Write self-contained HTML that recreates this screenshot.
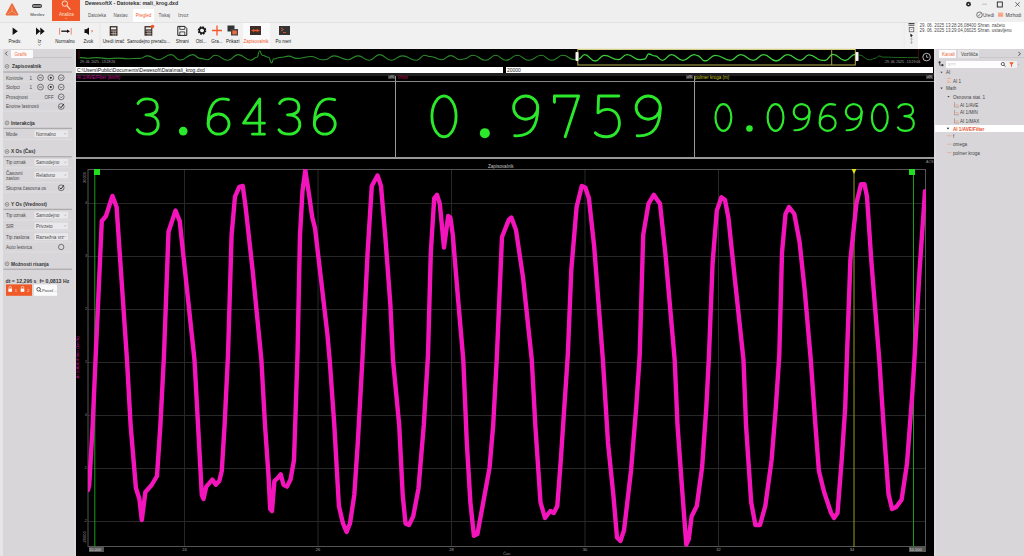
<!DOCTYPE html>
<html><head><meta charset="utf-8">
<style>
*{margin:0;padding:0;box-sizing:border-box}
html,body{width:1024px;height:556px;overflow:hidden;background:#f0f0f0;font-family:"Liberation Sans",sans-serif;color:#333}
.a{position:absolute;white-space:nowrap}
.t{font-size:5px;line-height:6px}
</style></head><body>
<div class="a" style="left:0;top:0;width:1024px;height:22px;background:#efefef"></div>
<!-- logo -->
<svg class="a" style="left:5px;top:3px" width="14" height="14" viewBox="0 0 14 14"><path d="M7 1.2 L12.6 11.6 L1.4 11.6 Z" fill="#ec6c3c" stroke="#ec6c3c" stroke-width="1.6" stroke-linejoin="round"/><path d="M7 3.5 L7 8 M7 8 L2.8 11 M7 8 L11.2 11" stroke="#f6a27c" stroke-width="0.9"/></svg>
<div class="a" style="left:31.8px;top:4.2px;width:10.4px;height:3.5px;border:0.8px solid #333;border-radius:1.5px;background:#888"></div>
<div class="a" style="left:30.3px;top:11.6px;font-size:4.4px;line-height:5.5px;color:#333">Merilev</div>
<div class="a" style="left:52px;top:0;width:28px;height:21px;background:#f0582a"></div>
<svg class="a" style="left:60.5px;top:0.3px" width="12" height="12" viewBox="0 0 12 12"><circle cx="3.8" cy="3.6" r="2.7" fill="none" stroke="#fde0d0" stroke-width="1"/><path d="M5.8 5.6 L9.4 9.6" stroke="#fde0d0" stroke-width="1.2"/></svg>
<div class="a" style="left:59px;top:11.6px;font-size:4.5px;line-height:5.5px;color:#fde0d0">Analiza</div>
<div class="a" style="left:64.5px;top:18px;width:0;height:0;border-left:1.5px solid transparent;border-right:1.5px solid transparent;border-top:1.5px solid #fbc8b0"></div>
<div class="a" style="left:85px;top:0.4px;font-size:5.3px;font-weight:bold;color:#333">DewesoftX - Datoteka: mali_krog.dxd</div>
<div class="a" style="left:133px;top:9px;width:21px;height:13px;background:#fff"></div>
<div class="a t" style="left:88px;top:13.3px;font-size:4.5px;color:#555">Datoteka</div>
<div class="a t" style="left:113.4px;top:13.3px;font-size:4.5px;color:#555">Nastav.</div>
<div class="a t" style="left:135.7px;top:13.3px;font-size:4.5px;color:#f0582a">Pregled</div>
<div class="a t" style="left:158.5px;top:13.3px;font-size:4.5px;color:#555">Tiskaj</div>
<div class="a t" style="left:177.9px;top:13.3px;font-size:4.5px;color:#555">Izvoz</div>
<!-- toolbar -->
<div class="a" style="left:0;top:22px;width:1024px;height:27px;background:#f1f1f1;border-top:1px solid #e2e2e2"></div>
<div class="a" style="left:242.5px;top:22.5px;width:27.5px;height:25.5px;background:#fafafa"></div>
<div class="a" style="left:-25.2px;width:80px;text-align:center;top:39.3px;font-size:4.5px;line-height:5.5px;color:#222">Predv.</div>
<div class="a" style="left:-0.5px;width:80px;text-align:center;top:39.3px;font-size:4.5px;line-height:5.5px;color:#222">Iz</div>
<div class="a" style="left:25px;width:80px;text-align:center;top:39.3px;font-size:4.5px;line-height:5.5px;color:#222">Normalno</div>
<div class="a" style="left:48.400000000000006px;width:80px;text-align:center;top:39.3px;font-size:4.5px;line-height:5.5px;color:#222">Zvok</div>
<div class="a" style="left:73.4px;width:80px;text-align:center;top:39.3px;font-size:4.5px;line-height:5.5px;color:#222">Uredi izrač</div>
<div class="a" style="left:108.4px;width:80px;text-align:center;top:39.3px;font-size:4.5px;line-height:5.5px;color:#222">Samodejno preraču...</div>
<div class="a" style="left:142.2px;width:80px;text-align:center;top:39.3px;font-size:4.5px;line-height:5.5px;color:#222">Shrani</div>
<div class="a" style="left:161.2px;width:80px;text-align:center;top:39.3px;font-size:4.5px;line-height:5.5px;color:#222">Obl...</div>
<div class="a" style="left:177px;width:80px;text-align:center;top:39.3px;font-size:4.5px;line-height:5.5px;color:#222">Gra...</div>
<div class="a" style="left:192.8px;width:80px;text-align:center;top:39.3px;font-size:4.5px;line-height:5.5px;color:#222">Prikazi</div>
<div class="a" style="left:216px;width:80px;text-align:center;top:39.3px;font-size:4.5px;line-height:5.5px;color:#f0582a">Zapisovalnik</div>
<div class="a" style="left:243.3px;width:80px;text-align:center;top:39.3px;font-size:4.5px;line-height:5.5px;color:#222">Po meri</div>

<svg class="a" style="left:0;top:22px" width="300" height="27" viewBox="0 0 300 27">
<path d="M12.6 5.4 L17.8 9.2 L12.6 13 Z" fill="#111"/>
<path d="M36 5.4 L40.3 9.2 L36 13 Z M40.3 5.4 L44.6 9.2 L40.3 13 Z" fill="#111"/>
<path d="M38.3 22.2 l1.2 1.2 l1.2 -1.2" fill="none" stroke="#555" stroke-width="0.6"/>
<path d="M59.6 6 V12.6 M71.2 6 V12.6" stroke="#f0582a" stroke-width="0.7"/>
<path d="M61.3 9.2 H67.5" stroke="#111" stroke-width="1.3"/><path d="M67 7.4 L70 9.2 L67 11 Z" fill="#111"/>
<path d="M84.5 7.3 H86.3 L89 5.4 V13 L86.3 11.1 H84.5 Z" fill="#111"/><path d="M91.2 8.3 l1.8 1.8 M93 8.3 l-1.8 1.8" stroke="#f0582a" stroke-width="0.6"/>
<g transform="translate(-3.3,0.6)"><rect x="113" y="3.5" width="7.8" height="9.6" fill="#3a2a22"/><rect x="114.3" y="4.8" width="5.2" height="2" fill="#eee"/>
<path d="M114 8.5 H120 M114 11 H120 M116.5 8 V13 M118.5 8 V13" stroke="#ddd" stroke-width="0.6"/></g>
<g transform="translate(3.5,0.6)"><rect x="141" y="3.5" width="7.8" height="9.6" fill="#3a2a22"/><rect x="142.3" y="4.8" width="5.4" height="2" fill="#eee"/>
<path d="M142 8.5 H148 M142 11 H148 M144.5 8 V13 M146.5 8 V13" stroke="#ddd" stroke-width="0.6"/><circle cx="149" cy="4" r="1.8" fill="#f0582a"/></g>
<g transform="translate(1.8,0.4)"><path d="M176 4 H183 L185 6 V13 H176 Z" fill="none" stroke="#222" stroke-width="1"/><path d="M178 4 V7 H183 V4 M178 13 V9.5 H183 V13" fill="none" stroke="#222" stroke-width="0.8"/></g>
<circle cx="202" cy="8.5" r="3.2" fill="none" stroke="#111" stroke-width="2.2" stroke-dasharray="1.6 0.9"/><circle cx="202" cy="8.5" r="2.6" fill="none" stroke="#111" stroke-width="1.3"/>
<path d="M217 3.5 V13.5 M212 8.5 H222" stroke="#f0582a" stroke-width="1.3"/>
<rect x="227.5" y="3.5" width="7" height="6" fill="#333"/><rect x="231" y="7" width="7" height="6.5" fill="#444"/><rect x="232.3" y="8.5" width="4.5" height="3.8" fill="#f26a3d"/>
<rect x="250" y="4" width="11" height="9" fill="#3a2e2a"/><path d="M251.5 8.5 H259.5" stroke="#f0582a" stroke-width="1.3"/><path d="M253 7 L255 8.5 L253 10 M258 7 L256 8.5 L258 10" stroke="#f0582a" stroke-width="0.7" fill="none"/>
<rect x="279" y="4" width="11" height="9" fill="#333"/><path d="M281 6 L283.5 7.5 L281 9 M283 10.5 H286" stroke="#f0582a" stroke-width="0.8" fill="none"/>
<path d="M100 1 V26" stroke="#e0e0e0" stroke-width="0.7"/>
</svg>
<!-- event log -->
<svg class="a" style="left:900px;top:20px" width="20" height="29">
<path d="M4.3 1 V29" stroke="#e6e6e6" stroke-width="0.6"/>
<path d="M8.5 3.5 H14.5 M8.5 5.2 H14.5" stroke="#444" stroke-width="1"/>
<rect x="9.2" y="7.4" width="4.6" height="4.4" fill="none" stroke="#555" stroke-width="0.7"/><path d="M10.6 8.8 L11.5 10 L12.4 8.8" fill="none" stroke="#777" stroke-width="0.5"/>
<path d="M10.4 13.6 L13 15.8 L11.6 16 L12.2 17 L11.6 17.2 L11 16.2 L10.4 17 Z" fill="#111"/>
<path d="M11.5 18 V23.5 M10.3 21.8 L11.5 23.5 L12.7 21.8 M10.3 19.6 L11.5 18 L12.7 19.6" fill="none" stroke="#999" stroke-width="0.6"/>
</svg>
<div class="a" style="left:918.3px;top:21.5px;width:106px;height:27.5px;background:#fff"></div>
<div class="a" style="left:919.5px;top:23px;font-size:4.45px;line-height:5.3px;color:#4a4a4a">29. 06. 2025 13:28:26,08400 Shran. začeto<br>29. 06. 2025 13:29:04,06025 Shran. ustavljeno</div>


<!-- main black -->
<div class="a" style="left:76px;top:49px;width:858px;height:507px;background:#000"></div>
<div class="a" style="left:0;top:49px;width:76px;height:507px;background:#d8d6d9"></div>
<div class="a" style="left:0;top:49px;width:2.5px;height:507px;background:#e6e5e7"></div>
<div class="a" style="left:73.8px;top:49px;width:2px;height:507px;background:#dddbde"></div>
<div class="a" style="left:11px;top:49.7px;width:22px;height:8px;background:#fbfbfb"></div>
<div class="a" style="left:33px;top:57px;width:39px;height:0.8px;background:#c4c4c4"></div>
<div class="a" style="left:14.5px;top:51.71px;font-size:4.6px;line-height:5.98px;color:#f26a3d;">Grafik</div>
<svg class="a" style="left:0;top:49px" width="76" height="260"><path d="M7.2 2.6 L5.4 4.5 L7.2 6.4" fill="none" stroke="#444" stroke-width="0.9"/><circle cx="7" cy="17.400000000000006" r="1.9" fill="none" stroke="#666" stroke-width="0.6"/><path d="M5.9 17.400000000000006 H8.1" stroke="#666" stroke-width="0.5"/><path d="M3.5 23 H72" stroke="#9a9a9a" stroke-width="0.9"/><circle cx="7" cy="73.9" r="1.9" fill="none" stroke="#666" stroke-width="0.6"/><path d="M5.9 73.9 H8.1" stroke="#666" stroke-width="0.5"/><path d="M3.5 79.30000000000001 H72" stroke="#9a9a9a" stroke-width="0.9"/><circle cx="7" cy="102.5" r="1.9" fill="none" stroke="#666" stroke-width="0.6"/><path d="M5.9 102.5 H8.1" stroke="#666" stroke-width="0.5"/><path d="M3.5 107.80000000000001 H72" stroke="#9a9a9a" stroke-width="0.9"/><circle cx="7" cy="155.4" r="1.9" fill="none" stroke="#666" stroke-width="0.6"/><path d="M5.9 155.4 H8.1" stroke="#666" stroke-width="0.5"/><path d="M3.5 160.3 H72" stroke="#9a9a9a" stroke-width="0.9"/><circle cx="7" cy="214.8" r="1.9" fill="none" stroke="#666" stroke-width="0.6"/><path d="M5.9 214.8 H8.1" stroke="#666" stroke-width="0.5"/><path d="M3.5 220.2 H72" stroke="#9a9a9a" stroke-width="0.9"/><path d="M3.5 32.400000000000006 H72" stroke="#e4e4e4" stroke-width="0.6"/><path d="M3.5 42.2 H72" stroke="#e4e4e4" stroke-width="0.6"/><path d="M3.5 52 H72" stroke="#e4e4e4" stroke-width="0.6"/><path d="M3.5 62 H72" stroke="#e4e4e4" stroke-width="0.6"/><path d="M3.5 90.5 H72" stroke="#e4e4e4" stroke-width="0.6"/><path d="M3.5 118.80000000000001 H72" stroke="#e4e4e4" stroke-width="0.6"/><path d="M3.5 133.6 H72" stroke="#e4e4e4" stroke-width="0.6"/><path d="M3.5 143 H72" stroke="#e4e4e4" stroke-width="0.6"/><path d="M3.5 171.1 H72" stroke="#e4e4e4" stroke-width="0.6"/><path d="M3.5 181.9 H72" stroke="#e4e4e4" stroke-width="0.6"/><path d="M3.5 192.8 H72" stroke="#e4e4e4" stroke-width="0.6"/><path d="M3.5 203 H72" stroke="#e4e4e4" stroke-width="0.6"/><circle cx="40.5" cy="28.700000000000003" r="2.9" fill="none" stroke="#333" stroke-width="0.6"/><path d="M39.0 28.700000000000003 H42.0" stroke="#333" stroke-width="0.6"/><circle cx="50.8" cy="28.700000000000003" r="2.9" fill="none" stroke="#333" stroke-width="0.6"/><circle cx="50.8" cy="28.700000000000003" r="1" fill="#222"/><circle cx="61.2" cy="28.700000000000003" r="2.9" fill="none" stroke="#333" stroke-width="0.6"/><path d="M59.800000000000004 28.200000000000003 L61.2 29.6 L62.6 28.200000000000003" fill="none" stroke="#333" stroke-width="0.6"/><circle cx="40.5" cy="38.099999999999994" r="2.9" fill="none" stroke="#333" stroke-width="0.6"/><path d="M39.0 38.099999999999994 H42.0" stroke="#333" stroke-width="0.6"/><circle cx="50.8" cy="38.099999999999994" r="2.9" fill="none" stroke="#333" stroke-width="0.6"/><circle cx="50.8" cy="38.099999999999994" r="1" fill="#222"/><circle cx="61.2" cy="38.099999999999994" r="2.9" fill="none" stroke="#333" stroke-width="0.6"/><path d="M59.800000000000004 37.599999999999994 L61.2 38.99999999999999 L62.6 37.599999999999994" fill="none" stroke="#333" stroke-width="0.6"/><circle cx="61.2" cy="47.900000000000006" r="2.9" fill="none" stroke="#333" stroke-width="0.6"/><path d="M59.800000000000004 47.400000000000006 L61.2 48.800000000000004 L62.6 47.400000000000006" fill="none" stroke="#333" stroke-width="0.6"/><circle cx="61.2" cy="57.5" r="2.9" fill="none" stroke="#333" stroke-width="0.6"/><path d="M59.6 57.3 L61.0 58.8 L63.800000000000004 54.9" fill="none" stroke="#222" stroke-width="0.9"/><circle cx="61.2" cy="138.8" r="2.9" fill="none" stroke="#333" stroke-width="0.6"/><path d="M59.6 138.60000000000002 L61.0 140.10000000000002 L63.800000000000004 136.20000000000002" fill="none" stroke="#222" stroke-width="0.9"/><circle cx="61.2" cy="198" r="2.7" fill="none" stroke="#333" stroke-width="0.6"/><rect x="34.5" y="81.39999999999999" width="33.5" height="6.6" fill="#e9e8ea"/><path d="M64.3 84.19999999999999 L65.3 85.19999999999999 L66.3 84.19999999999999" fill="none" stroke="#888" stroke-width="0.5"/><rect x="34.5" y="110.00000000000001" width="33.5" height="6.6" fill="#e9e8ea"/><path d="M64.3 112.80000000000001 L65.3 113.80000000000001 L66.3 112.80000000000001" fill="none" stroke="#888" stroke-width="0.5"/><rect x="34.5" y="122.7" width="33.5" height="6.6" fill="#e9e8ea"/><path d="M64.3 125.5 L65.3 126.5 L66.3 125.5" fill="none" stroke="#888" stroke-width="0.5"/><rect x="34.5" y="162.79999999999998" width="33.5" height="6.6" fill="#e9e8ea"/><path d="M64.3 165.6 L65.3 166.6 L66.3 165.6" fill="none" stroke="#888" stroke-width="0.5"/><rect x="34.5" y="173.6" width="33.5" height="6.6" fill="#e9e8ea"/><path d="M64.3 176.4 L65.3 177.4 L66.3 176.4" fill="none" stroke="#888" stroke-width="0.5"/><rect x="34.5" y="184.29999999999998" width="33.5" height="6.6" fill="#e9e8ea"/><path d="M64.3 187.1 L65.3 188.1 L66.3 187.1" fill="none" stroke="#888" stroke-width="0.5"/><rect x="6" y="235.4" width="26" height="11.4" fill="#f05a28"/><rect x="33.8" y="235.4" width="23.2" height="11.4" fill="#fafafa"/><path d="M9.0 239.6 V238.6 A1.2 1.2 0 0 1 11.399999999999999 238.6 V239.6" fill="none" stroke="#fff" stroke-width="0.6"/><rect x="8.399999999999999" y="239.6" width="3.6" height="3.2" fill="#fff"/><path d="M21.3 239.6 V238.6 A1.2 1.2 0 0 1 23.7 238.6 V239.6" fill="none" stroke="#fff" stroke-width="0.6"/><rect x="20.7" y="239.6" width="3.6" height="3.2" fill="#fff"/><circle cx="38.6" cy="240.3" r="1.8" fill="none" stroke="#222" stroke-width="0.7"/><path d="M39.9 241.6 L41.3 243" stroke="#222" stroke-width="0.8"/></svg>
<div class="a" style="left:12px;top:64.18px;font-size:4.8px;line-height:6.24px;color:#333;font-weight:bold;">Zapisovalnik</div>
<div class="a" style="left:6px;top:75.61px;font-size:4.6px;line-height:5.98px;color:#4a4a4a;">Kontrole</div>
<div class="a" style="left:29.5px;top:75.61px;font-size:4.6px;line-height:5.98px;color:#4a4a4a;">1</div>
<div class="a" style="left:6px;top:85.01px;font-size:4.6px;line-height:5.98px;color:#4a4a4a;">Stolpci</div>
<div class="a" style="left:29.5px;top:85.01px;font-size:4.6px;line-height:5.98px;color:#4a4a4a;">1</div>
<div class="a" style="left:6px;top:94.81px;font-size:4.6px;line-height:5.98px;color:#4a4a4a;">Prosojnost</div>
<div class="a" style="left:44.5px;top:94.81px;font-size:4.6px;line-height:5.98px;color:#4a4a4a;">OFF</div>
<div class="a" style="left:6px;top:104.41px;font-size:4.6px;line-height:5.98px;color:#4a4a4a;">Enotne lastnosti</div>
<div class="a" style="left:11px;top:120.68px;font-size:4.8px;line-height:6.24px;color:#333;font-weight:bold;">Interakcija</div>
<div class="a" style="left:6px;top:131.81px;font-size:4.6px;line-height:5.98px;color:#4a4a4a;">Mode</div>
<div class="a" style="left:36px;top:131.81px;font-size:4.6px;line-height:5.98px;color:#4a4a4a;">Normalno</div>
<div class="a" style="left:11px;top:149.28px;font-size:4.8px;line-height:6.24px;color:#333;font-weight:bold;">X Os (Čas)</div>
<div class="a" style="left:6px;top:160.21px;font-size:4.6px;line-height:5.98px;color:#4a4a4a;">Tip oznak</div>
<div class="a" style="left:36px;top:160.21px;font-size:4.6px;line-height:5.98px;color:#4a4a4a;">Samodejno</div>
<div class="a" style="left:6px;top:171.01px;font-size:4.6px;line-height:5.98px;color:#4a4a4a;">Časovni</div>
<div class="a" style="left:6px;top:175.91px;font-size:4.6px;line-height:5.98px;color:#4a4a4a;">zaslon</div>
<div class="a" style="left:36px;top:172.91px;font-size:4.6px;line-height:5.98px;color:#4a4a4a;">Relativno</div>
<div class="a" style="left:6px;top:185.71px;font-size:4.6px;line-height:5.98px;color:#4a4a4a;">Skupna časovna os</div>
<div class="a" style="left:11px;top:202.18px;font-size:4.8px;line-height:6.24px;color:#333;font-weight:bold;">Y Os (Vrednost)</div>
<div class="a" style="left:6px;top:213.01px;font-size:4.6px;line-height:5.98px;color:#4a4a4a;">Tip oznak</div>
<div class="a" style="left:36px;top:213.01px;font-size:4.6px;line-height:5.98px;color:#4a4a4a;">Samodejno</div>
<div class="a" style="left:6px;top:223.81px;font-size:4.6px;line-height:5.98px;color:#4a4a4a;">SIR</div>
<div class="a" style="left:36px;top:223.81px;font-size:4.6px;line-height:5.98px;color:#4a4a4a;">Privzeto</div>
<div class="a" style="left:6px;top:234.51px;font-size:4.6px;line-height:5.98px;color:#4a4a4a;">Tip zaslona</div>
<div class="a" style="left:36px;top:234.51px;font-size:4.6px;line-height:5.98px;color:#4a4a4a;">Razsežna vrz</div>
<div class="a" style="left:6px;top:244.91px;font-size:4.6px;line-height:5.98px;color:#4a4a4a;">Auto lestvica</div>
<div class="a" style="left:11px;top:261.58px;font-size:4.8px;line-height:6.24px;color:#333;font-weight:bold;">Možnosti risanja</div>
<div class="a" style="left:5.5px;top:278.42px;font-size:5.2px;line-height:6.76px;color:#333;font-weight:bold;">dt = 12,296 s&nbsp; f= 0,0813 Hz</div>
<div class="a" style="left:14.8px;top:287.64px;font-size:4.4px;line-height:5.72px;color:#fde0d0;">1</div>
<div class="a" style="left:27px;top:287.64px;font-size:4.4px;line-height:5.72px;color:#fde0d0;">2</div>
<div class="a" style="left:42px;top:287.57px;font-size:4.2px;line-height:5.46px;color:#444;">Poveč...</div>
<div class="a" style="left:934px;top:49px;width:90px;height:507px;background:#d8d6d9"></div>
<div class="a" style="left:934px;top:49px;width:2.2px;height:507px;background:#dddbde"></div>
<div class="a" style="left:939.2px;top:50.3px;width:17.2px;height:7.5px;background:#fbfbfb"></div>
<div class="a" style="left:957.6px;top:50.3px;width:21.3px;height:7.5px;background:#e6e6e6"></div>
<div class="a" style="left:979px;top:57px;width:45px;height:0.8px;background:#c8c8c8"></div>
<div class="a" style="left:942px;top:51.91px;font-size:4.6px;line-height:5.98px;color:#f26a3d;">Kanali</div>
<div class="a" style="left:961px;top:51.91px;font-size:4.6px;line-height:5.98px;color:#444;">Vozlišča</div>
<div class="a" style="left:946px;top:60.7px;width:58px;height:7.4px;background:#fdfdfd"></div>
<div class="a" style="left:1004px;top:60.7px;width:13px;height:7.4px;background:#f0f0f0"></div>
<div class="a" style="left:948px;top:62.44px;font-size:4.4px;line-height:5.72px;color:#bbb;">3??</div>
<svg class="a" style="left:935px;top:49px" width="89" height="120"><path d="M83.5 2.8 L85.3 4.8 L83.5 6.8" fill="none" stroke="#333" stroke-width="0.8"/><circle cx="4.6" cy="13.4" r="1.1" fill="#333"/><circle cx="7.4" cy="16.2" r="1.1" fill="#333"/><path d="M4.6 14 V16.2 H6.5" fill="none" stroke="#333" stroke-width="0.6"/><circle cx="67.8" cy="15" r="1.6" fill="none" stroke="#222" stroke-width="0.7"/><path d="M69 16.2 L70.3 17.5" stroke="#222" stroke-width="0.8"/><path d="M74.2 13.3 H78.8 L77 15.8 V18 L76 17.4 V15.8 Z" fill="#f05a28"/><path d="M82.8 15 L83.6 15.8 L84.4 15" fill="none" stroke="#999" stroke-width="0.5"/><path d="M5.3 22.700000000000006 H7.7 L6.5 24.300000000000004 Z" fill="#444"/><path d="M5.3 38.599999999999994 H7.7 L6.5 40.199999999999996 Z" fill="#444"/><path d="M12.3 46.89999999999999 H14.7 L13.5 48.49999999999999 Z" fill="#444"/><path d="M11.7 78.8 H14.3 L13 80.6 Z" fill="#222"/><path d="M12 29.5 H16 M12 31.5 L16 33.5 M12 33.5 H14" stroke="#f4a080" stroke-width="0.7"/><path d="M19.5 53.199999999999996 V57.99999999999999 H24" fill="none" stroke="#9a6a5a" stroke-width="0.5"/><path d="M20.5 55.89999999999999 H23.5" stroke="#f08060" stroke-width="0.5"/><path d="M19.5 61.00000000000001 V65.80000000000001 H24" fill="none" stroke="#9a6a5a" stroke-width="0.5"/><path d="M20.5 63.7 H23.5" stroke="#f08060" stroke-width="0.5"/><path d="M19.5 69.19999999999999 V74.0 H24" fill="none" stroke="#9a6a5a" stroke-width="0.5"/><path d="M20.5 71.89999999999999 H23.5" stroke="#f08060" stroke-width="0.5"/><path d="M12.3 86.80000000000001 H16.3" stroke="#f08060" stroke-width="0.6" stroke-dasharray="1 0.5"/><path d="M12.3 95.19999999999999 H16.3" stroke="#f08060" stroke-width="0.6" stroke-dasharray="1 0.5"/><path d="M12.3 103.6 H16.3" stroke="#f08060" stroke-width="0.6" stroke-dasharray="1 0.5"/></svg>
<div class="a" style="left:935px;top:125.3px;width:89px;height:6.5px;background:#fff"></div>
<svg class="a" style="left:935px;top:49px" width="89" height="120"><path d="M11.7 78.8 H14.3 L13 80.6 Z" fill="#222"/></svg>
<div class="a" style="left:946px;top:70.31px;font-size:4.6px;line-height:5.98px;color:#444;">AI</div>
<div class="a" style="left:953px;top:78.71px;font-size:4.6px;line-height:5.98px;color:#444;">AI 1</div>
<div class="a" style="left:946px;top:86.21px;font-size:4.6px;line-height:5.98px;color:#444;">Math</div>
<div class="a" style="left:953px;top:94.51px;font-size:4.6px;line-height:5.98px;color:#444;">Osnovna stat. 1</div>
<div class="a" style="left:960px;top:102.51px;font-size:4.6px;line-height:5.98px;color:#444;">AI 1/AVE</div>
<div class="a" style="left:960px;top:110.31px;font-size:4.6px;line-height:5.98px;color:#444;">AI 1/MIN</div>
<div class="a" style="left:960px;top:118.51px;font-size:4.6px;line-height:5.98px;color:#444;">AI 1/MAX</div>
<div class="a" style="left:953px;top:126.51px;font-size:4.6px;line-height:5.98px;color:#e8502a;font-weight:bold;">AI 1/AVE/Filter</div>
<div class="a" style="left:953px;top:133.71px;font-size:4.6px;line-height:5.98px;color:#444;">f</div>
<div class="a" style="left:953px;top:142.11px;font-size:4.6px;line-height:5.98px;color:#444;">omega</div>
<div class="a" style="left:953px;top:150.51px;font-size:4.6px;line-height:5.98px;color:#444;">polmer kroga</div>
<svg class="a" style="left:960px;top:0" width="64" height="22"><circle cx="8.5" cy="4.2" r="2.4" fill="#222"/><circle cx="8.5" cy="4.2" r="0.8" fill="#eee"/><path d="M22 4.2 H27" stroke="#aaa" stroke-width="0.7"/><rect x="37.3" y="2" width="5" height="5" fill="none" stroke="#222" stroke-width="0.9"/><path d="M55.3 2.2 L59.7 6.6 M59.7 2.2 L55.3 6.6" stroke="#333" stroke-width="0.7"/><circle cx="19.5" cy="14.8" r="2.8" fill="none" stroke="#444" stroke-width="0.7"/><path d="M18.3 16 L20.8 13.5" stroke="#444" stroke-width="0.7"/><rect x="38" y="12.5" width="5.2" height="4.5" fill="#f6b49a"/><path d="M38 14 H43.2 M38 15.5 H43.2" stroke="#f08a64" stroke-width="0.4"/></svg>
<div class="a" style="left:983px;top:12.71px;font-size:4.6px;line-height:5.98px;color:#444;">Uredi</div>
<div class="a" style="left:1005.5px;top:12.71px;font-size:4.6px;line-height:5.98px;color:#444;">Mizhodi</div>
<svg class="a" style="left:0;top:0" width="1024" height="70">
<path d="M79 50 V59" stroke="#5a1010" stroke-width="0.8"/>
<path d="M918.4 49 V62" stroke="#5a1010" stroke-width="0.8"/>
<path d="M79.8,57.6 C83.9,57.6 83.9,58.2 88.0,58.2 C92.5,58.2 92.5,57.6 97.0,57.6 C102.5,57.6 102.5,58.6 108.0,58.6 C113.0,58.6 113.0,58.1 118.0,58.1 C123.0,58.1 123.0,58.7 128.0,58.7 C133.8,58.7 133.8,58.4 139.5,58.4 C143.6,58.4 143.6,55.9 147.7,55.9 C153.1,55.9 153.1,59.7 158.5,59.7 C164.8,59.7 164.8,54.6 171.2,54.6 C175.6,54.6 175.6,60.0 180.1,60.0 C186.4,60.0 186.4,54.6 192.8,54.6 C196.4,54.6 196.4,58.4 200.0,58.4 C203.8,58.4 203.8,59.7 207.6,59.7 C211.4,59.7 211.4,55.3 215.2,55.3 C221.6,55.3 221.6,60.3 227.9,60.3 C233.0,60.3 233.0,54.6 238.1,54.6 C244.4,54.6 244.4,60.3 250.8,60.3 C253.9,60.3 253.9,57.2 257.0,57.2 C258.4,57.2 258.4,50.8 259.7,50.8 C260.9,50.8 260.9,55.3 262.2,55.3 C265.4,55.3 265.4,57.2 268.6,57.2 C270.1,57.2 270.1,62.9 271.7,62.9 C272.6,62.9 272.6,59.0 273.6,59.0 C277.4,59.0 277.4,57.2 281.2,57.2 C285.0,57.2 285.0,56.1 288.9,56.1 C292.7,56.1 292.7,58.4 296.5,58.4 C304.1,58.4 304.1,56.5 311.7,56.5 C316.8,56.5 316.8,59.7 321.9,59.7 C323.4,59.7 323.4,59.7 325.0,59.7 C329.4,59.7 329.4,55.9 333.9,55.9 C340.9,55.9 340.9,59.7 347.9,59.7 C352.9,59.7 352.9,55.9 358.0,55.9 C363.7,55.9 363.7,60.3 369.4,60.3 C374.5,60.3 374.5,54.6 379.6,54.6 C385.3,54.6 385.3,60.3 391.0,60.3 C396.7,60.3 396.7,55.9 402.4,55.9 C409.4,55.9 409.4,60.3 416.4,60.3 C420.5,60.3 420.5,55.3 424.7,55.3 C427.5,55.3 427.5,56.5 430.4,56.5 C436.1,56.5 436.1,59.7 441.8,59.7 C446.2,59.7 446.2,55.6 450.7,55.6 C455.4,55.6 455.4,59.7 460.2,59.7 C462.1,59.7 462.1,59.0 464.0,59.0 C468.4,59.0 468.4,55.3 472.9,55.3 C479.2,55.3 479.2,60.3 485.5,60.3 C490.6,60.3 490.6,55.3 495.7,55.3 C500.8,55.3 500.8,60.3 505.9,60.3 C511.6,60.3 511.6,55.3 517.3,55.3 C523.0,55.3 523.0,60.3 528.7,60.3 C535.0,60.3 535.0,55.3 541.4,55.3 C546.5,55.3 546.5,60.3 551.6,60.3 C557.3,60.3 557.3,55.3 563.0,55.3 C568.7,55.3 568.7,59.7 574.4,59.7 C575.7,59.7 575.7,59.0 577.0,59.0" fill="none" stroke="#2a8a2a" stroke-width="1.1"/>
<path d="M858.7,54.9 C864.3,54.9 864.3,59.9 869.9,59.9 C872.7,59.9 872.7,58.2 875.5,58.2 C877.2,58.2 877.2,56.0 878.9,56.0 C881.1,56.0 881.1,57.1 883.4,57.1 C891.7,57.1 891.7,57.5 900.0,57.5 C909.1,57.5 909.1,57.7 918.2,57.7" fill="none" stroke="#1f6a1f" stroke-width="1" />
<path d="M578.8,59.0 C581.6,59.0 581.6,54.6 584.5,54.6 C589.9,54.6 589.9,61.0 595.3,61.0 C599.8,61.0 599.8,55.3 604.2,55.3 C611.2,55.3 611.2,59.7 618.2,59.7 C622.6,59.7 622.6,54.6 627.0,54.6 C633.4,54.6 633.4,59.7 639.7,59.7 C642.2,59.7 642.2,59.0 644.8,59.0 C646.7,59.0 646.7,54.0 648.6,54.0 C651.8,54.0 651.8,55.9 655.0,55.9 C658.8,55.9 658.8,60.3 662.6,60.3 C667.0,60.3 667.0,54.6 671.5,54.6 C677.2,54.6 677.2,60.3 682.9,60.3 C688.6,60.3 688.6,54.6 694.3,54.6 C695.6,54.6 695.6,55.3 696.9,55.3 C701.0,55.3 701.0,61.0 705.1,61.0 C710.2,61.0 710.2,55.3 715.2,55.3 C722.9,55.3 722.9,60.3 730.5,60.3 C735.5,60.3 735.5,54.6 740.6,54.6 C747.0,54.6 747.0,60.3 753.3,60.3 C758.4,60.3 758.4,54.6 763.5,54.6 C769.9,54.6 769.9,61.0 776.2,61.0 C781.9,61.0 781.9,54.6 787.6,54.6 C794.0,54.6 794.0,60.3 800.3,60.3 C804.8,60.3 804.8,54.9 809.2,54.9 C815.5,54.9 815.5,60.3 821.9,60.3 C823.5,60.3 823.5,60.5 825.0,60.5 C829.0,60.5 829.0,54.3 832.9,54.3 C839.0,54.3 839.0,60.5 845.2,60.5 C850.2,60.5 850.2,54.3 855.3,54.3" fill="none" stroke="#3ccc3c" stroke-width="1.3"/>
<rect x="577.8" y="49.4" width="277.5" height="15.6" fill="none" stroke="#b8b04a" stroke-width="1"/>
<path d="M578.5 49.4 H855" stroke="#e8e0a0" stroke-width="0.8"/>
<path d="M831.7 49.5 V65" stroke="#b8b04a" stroke-width="0.9"/>
<rect x="575.5" y="52" width="3" height="9" rx="0.8" fill="#f4f4f4"/>
<rect x="855.5" y="52" width="3" height="9" rx="0.8" fill="#f4f4f4"/>
<circle cx="926.6" cy="57.1" r="3.8" fill="none" stroke="#ccc" stroke-width="0.9"/>
<path d="M926.6 55 V57.3 H928.4" fill="none" stroke="#ccc" stroke-width="0.8"/>
</svg>
<div class="a" style="left:80px;top:60px;font-size:3.4px;line-height:5px;color:#aaa">29. 06. 2025 - 13:28:26</div>
<div class="a" style="left:885px;top:60px;font-size:3.4px;line-height:5px;color:#aaa">29. 06. 2025 - 13:29:04</div>

<div class="a" style="left:76px;top:66.8px;width:427px;height:5.8px;background:#fff"></div>
<div class="a" style="left:505.5px;top:66.8px;width:427.5px;height:5.8px;background:#fff"></div>
<div class="a" style="left:76px;top:73px;width:858px;height:2.6px;background:#1f1f1f"></div>
<div class="a" style="left:76px;top:81px;width:858px;height:1px;background:#888"></div>
<div class="a" style="left:76px;top:157px;width:858px;height:1.5px;background:#999"></div>
<div class="a" style="left:395.2px;top:76px;width:1.3px;height:82px;background:#999"></div>
<div class="a" style="left:693.5px;top:76px;width:1.3px;height:82px;background:#999"></div>
<div class="a" style="left:77px;top:66.5px;font-size:5px;line-height:6.5px;color:#111">C:\Users\Public\Documents\Dewesoft\Data\mali_krog.dxd</div>
<div class="a" style="left:507px;top:66.5px;font-size:5px;line-height:6.5px;color:#222">20000</div>
<div class="a" style="left:77px;top:75.4px;font-size:4.5px;line-height:6px;color:#c8149a">AI 1/AVE/Filter (km/h)</div>
<div class="a" style="left:387.5px;top:74.5px;width:7.5px;height:4.5px;background:#3a3a3a;font-size:3.2px;line-height:4.5px;color:#bbb;text-align:center">ufN</div>
<div class="a" style="left:685.5px;top:74.5px;width:7.5px;height:4.5px;background:#3a3a3a;font-size:3.2px;line-height:4.5px;color:#bbb;text-align:center">ufN</div>
<div class="a" style="left:925.5px;top:74.5px;width:7.5px;height:4.5px;background:#3a3a3a;font-size:3.2px;line-height:4.5px;color:#bbb;text-align:center">ufN</div>
<div class="a" style="left:398px;top:75px;font-size:4.5px;line-height:6px;color:#c01050">f/min</div>
<div class="a" style="left:695px;top:75px;font-size:4.5px;line-height:6px;color:#c8c820">polmer kroga (m)</div>
<svg class="a" style="left:0;top:0" width="1024" height="556"><g fill="none" stroke="#2be82b" stroke-width="7.6" stroke-linecap="round" stroke-linejoin="round"><g transform="translate(136.08,97.65) scale(0.3780)"><path d="M5 15.5 C10 6,19 3.4,30 3.4 C46 3.4,56 12,56 25.5 C56 38,45 45.5,26 45.5 M26 45.5 C47 45.5,58.6 56,58.6 71 C58.6 87,46 96.6,30 96.6 C18 96.6,8 93,3.4 85"/></g><g transform="translate(171.48,97.65) scale(0.3780)"><circle cx="31" cy="88.5" r="11.5" fill="#2be82b" stroke="none"/></g><g transform="translate(206.88,97.65) scale(0.3780)"><path d="M57 5.5 C52 4,47 3.4,42 3.4 C18 3.4,3.4 28,3.4 70"/><ellipse cx="31" cy="70" rx="27.6" ry="26.6"/></g><g transform="translate(242.28,97.65) scale(0.3780)"><path d="M46 96.6 V3.4 L3.4 67.5 H58.6 M27 96.6 H58.6"/></g><g transform="translate(277.68,97.65) scale(0.3780)"><path d="M5 15.5 C10 6,19 3.4,30 3.4 C46 3.4,56 12,56 25.5 C56 38,45 45.5,26 45.5 M26 45.5 C47 45.5,58.6 56,58.6 71 C58.6 87,46 96.6,30 96.6 C18 96.6,8 93,3.4 85"/></g><g transform="translate(313.08,97.65) scale(0.3780)"><path d="M57 5.5 C52 4,47 3.4,42 3.4 C18 3.4,3.4 28,3.4 70"/><ellipse cx="31" cy="70" rx="27.6" ry="26.6"/></g></g><g fill="none" stroke="#2be82b" stroke-width="6.6" stroke-linecap="round" stroke-linejoin="round"><g transform="translate(430.45,94.50) scale(0.4370)"><ellipse cx="31" cy="50" rx="27.6" ry="46.6"/></g><g transform="translate(471.29,94.50) scale(0.4370)"><circle cx="31" cy="88.5" r="11.5" fill="#2be82b" stroke="none"/></g><g transform="translate(512.13,94.50) scale(0.4370)"><ellipse cx="31" cy="30" rx="27.6" ry="26.6"/><path d="M58.6 30 C58.6 72,44 96.6,6 94.5"/></g><g transform="translate(552.97,94.50) scale(0.4370)"><path d="M3.4 18 V3.4 H58.6 L28 96.6"/></g><g transform="translate(593.81,94.50) scale(0.4370)"><path d="M57 3.4 H11 L9.5 42 C17 36,24 34,31 34 C48 34,58.6 48,58.6 66 C58.6 85,46 96.6,29 96.6 C18 96.6,8 93,3.4 87.5"/></g><g transform="translate(634.65,94.50) scale(0.4370)"><ellipse cx="31" cy="30" rx="27.6" ry="26.6"/><path d="M58.6 30 C58.6 72,44 96.6,6 94.5"/></g></g><g fill="none" stroke="#2be82b" stroke-width="7.6" stroke-linecap="round" stroke-linejoin="round"><g transform="translate(714.50,103.10) scale(0.2870)"><ellipse cx="31" cy="50" rx="27.6" ry="46.6"/></g><g transform="translate(740.57,103.10) scale(0.2870)"><circle cx="31" cy="88.5" r="11.5" fill="#2be82b" stroke="none"/></g><g transform="translate(766.64,103.10) scale(0.2870)"><ellipse cx="31" cy="50" rx="27.6" ry="46.6"/></g><g transform="translate(792.71,103.10) scale(0.2870)"><ellipse cx="31" cy="30" rx="27.6" ry="26.6"/><path d="M58.6 30 C58.6 72,44 96.6,6 94.5"/></g><g transform="translate(818.78,103.10) scale(0.2870)"><path d="M57 5.5 C52 4,47 3.4,42 3.4 C18 3.4,3.4 28,3.4 70"/><ellipse cx="31" cy="70" rx="27.6" ry="26.6"/></g><g transform="translate(844.85,103.10) scale(0.2870)"><ellipse cx="31" cy="30" rx="27.6" ry="26.6"/><path d="M58.6 30 C58.6 72,44 96.6,6 94.5"/></g><g transform="translate(870.92,103.10) scale(0.2870)"><ellipse cx="31" cy="50" rx="27.6" ry="46.6"/></g><g transform="translate(896.99,103.10) scale(0.2870)"><path d="M5 15.5 C10 6,19 3.4,30 3.4 C46 3.4,56 12,56 25.5 C56 38,45 45.5,26 45.5 M26 45.5 C47 45.5,58.6 56,58.6 71 C58.6 87,46 96.6,30 96.6 C18 96.6,8 93,3.4 85"/></g></g></svg>

<div class="a" style="left:488px;top:163.5px;font-size:4.6px;line-height:6px;color:#c8c8c8">Zapisovalnik</div>
<div class="a" style="left:926px;top:159.5px;font-size:3.6px;line-height:5px;color:#999">AOS</div>
<div class="a" style="left:57px;top:355.5px;width:40px;text-align:center;font-size:4.4px;line-height:5px;color:#c0109a;transform:rotate(-90deg)">AI 1/AVE/Filter (km/h)</div>
<div class="a" style="left:75px;top:175px;width:18px;text-align:center;font-size:4px;line-height:5px;color:#999;transform:rotate(-90deg)">20000</div>
<div class="a" style="left:75px;top:534.5px;width:18px;text-align:center;font-size:4px;line-height:5px;color:#999;transform:rotate(-90deg)">-20000</div>
<div class="a" style="left:88.5px;top:546px;width:15px;height:6px;background:#555"></div>
<div class="a" style="left:89px;top:546.5px;font-size:4px;line-height:5px;color:#ddd">10.000</div>
<div class="a" style="left:909px;top:546px;width:17px;height:6px;background:#555"></div>
<div class="a" style="left:909.5px;top:546.5px;font-size:4px;line-height:5px;color:#ddd">10.500</div>
<div class="a" style="left:503px;top:551px;font-size:4.2px;line-height:5px;color:#999">Čas</div>
<div class="a" style="left:174.5px;width:20px;text-align:center;top:546.5px;font-size:4px;line-height:5px;color:#aaa">24</div>
<div class="a" style="left:308px;width:20px;text-align:center;top:546.5px;font-size:4px;line-height:5px;color:#aaa">26</div>
<div class="a" style="left:441.5px;width:20px;text-align:center;top:546.5px;font-size:4px;line-height:5px;color:#aaa">28</div>
<div class="a" style="left:575px;width:20px;text-align:center;top:546.5px;font-size:4px;line-height:5px;color:#aaa">30</div>
<div class="a" style="left:708.5px;width:20px;text-align:center;top:546.5px;font-size:4px;line-height:5px;color:#aaa">32</div>
<div class="a" style="left:842px;width:20px;text-align:center;top:546.5px;font-size:4px;line-height:5px;color:#aaa">34</div>
<div class="a" style="left:80px;width:7px;text-align:right;top:201.0px;font-size:3.8px;line-height:5px;color:#888">4</div>
<div class="a" style="left:80px;width:7px;text-align:right;top:254.0px;font-size:3.8px;line-height:5px;color:#888">3</div>
<div class="a" style="left:80px;width:7px;text-align:right;top:307.0px;font-size:3.8px;line-height:5px;color:#888">2</div>
<div class="a" style="left:80px;width:7px;text-align:right;top:360.0px;font-size:3.8px;line-height:5px;color:#888">1</div>
<div class="a" style="left:80px;width:7px;text-align:right;top:413.0px;font-size:3.8px;line-height:5px;color:#888">0</div>
<div class="a" style="left:80px;width:7px;text-align:right;top:466.0px;font-size:3.8px;line-height:5px;color:#888">-1</div>
<div class="a" style="left:80px;width:7px;text-align:right;top:519.0px;font-size:3.8px;line-height:5px;color:#888">-2</div>

<svg class="a" style="left:0;top:0" width="1024" height="556" viewBox="0 0 1024 556">
<defs><clipPath id="pc"><rect x="88" y="169" width="838" height="378"/></clipPath></defs>
<g stroke="#282828" stroke-width="1">
<path d="M88 203.5 H926 M88 256.5 H926 M88 309.5 H926 M88 362.5 H926 M88 415.5 H926 M88 468.5 H926 M88 521.5 H926"/>
<path d="M184.5 169 V547 M318 169 V547 M451.5 169 V547 M585 169 V547 M718.5 169 V547"/>
</g>
<rect x="88" y="169.5" width="837.5" height="377" fill="none" stroke="#555" stroke-width="1"/>
<path d="M94.8 169 V547" stroke="#1a9a1a" stroke-width="1"/>
<rect x="94" y="169" width="6" height="6" fill="#22dd22"/>
<path d="M913.5 169 V547" stroke="#1a9a1a" stroke-width="1"/>
<rect x="909" y="169" width="6" height="6" fill="#22dd22"/>
<path d="M854 169 V547" stroke="#9a9a20" stroke-width="1"/>
<path d="M851.5 169 L856.5 169 L854 174 Z" fill="#e0e020"/>
<g clip-path="url(#pc)"><polyline points="88,490 89.2,485 92.7,425 95.5,360 101.8,221 106,216 112.4,195.9 116.6,207 127,360 130.6,425 135.9,488 139.4,499 141.8,520 145.4,492 151.7,485 157,476 160.4,425 164,355 168.5,231.7 175.5,210.6 179.7,221 194.5,360 199,442.7 201.8,495 203.5,499 206.3,486.6 212.3,479.6 215.8,484.8 219.3,481 221.8,470.8 224.6,425 228,355 231.6,235 235,196.6 239.3,186.8 242.8,186 245.6,207 252.6,270 261.4,360 265,425 268.4,474 270.2,509 272,511 274.4,481 277.9,477.8 280.7,474.3 283.5,484.8 287,486.6 290.5,479.6 294,460 297.5,355 300,235 302.5,191 305.3,170.3 308.8,193 312.3,217.6 315,228 322,287.8 327.3,333.4 329.7,360 334.3,425 338.9,506 343,523.4 346.6,532 350,523.4 354.3,495 357.8,442.7 362.4,360 367.6,252.7 371.8,186 377.5,175.5 381,186 385.2,235 390.4,305 393,360 399.2,425 402.7,495 405.5,523.4 409,525 413.2,516.4 418.5,488.3 423.8,425 428,355 430.8,252.7 434.2,198.3 437,194.8 439.8,203.6 444,247.5 448.2,215.9 450.4,217.6 452.8,235 458,298.3 463.3,360 466.8,442.7 470.4,502.4 473.9,535.7 477.4,534 482.6,506 489.6,467.3 493.2,425 496.7,360 502,237 509,219.4 511.4,217.6 516,230 523,277.3 531.8,360 535.3,425 540.5,502.4 545,518 550.3,511 553.8,513 557.3,506 560.8,460 564.3,407.6 567.8,355 571.3,270 576.6,207 581.8,186 585.4,187.8 588.9,198.3 594.1,245.7 602.9,360 608,442.7 613.4,495.4 617,537.5 620.4,541 624,530.4 631,470.8 636.2,407.6 639.7,355 643.2,235 648.5,203.6 653.8,194.8 657.3,200 660,203.6 665.3,252.7 670.5,312 674.7,360 677.5,425 681.8,484.8 683.9,513 686.3,544.5 688.8,539 691.6,516.4 696.8,506 702.1,467.3 706.3,407.6 709,355 712.6,263 716.8,210.6 721.4,197.3 725,200 728.4,217.6 735.4,284.3 743.5,360 746,425 751.2,502.4 755.4,525 760,525 765.3,506 771.6,460 775.8,407.6 779.3,355 782,252.7 785.5,214 789,207 794.3,214 799.6,242.2 804.8,291.3 810.8,360 815.4,425 818.9,470.8 824.1,492 831.1,513 834,518 837.5,513 841.7,460 845.2,407.6 847,355 850.4,259.7 856.4,203.6 861,184.3 864.5,184.3 867,196.6 871.5,263.2 879.3,360 883.6,426 888.5,494 892,509 896.2,507 901.6,499.8 907,463.6 912.5,391.2 914.4,360 919.6,270 925,191.3" fill="none" stroke="#f414bc" stroke-width="4.4" stroke-linejoin="round" stroke-linecap="round"/></g>
</svg>
</body></html>
